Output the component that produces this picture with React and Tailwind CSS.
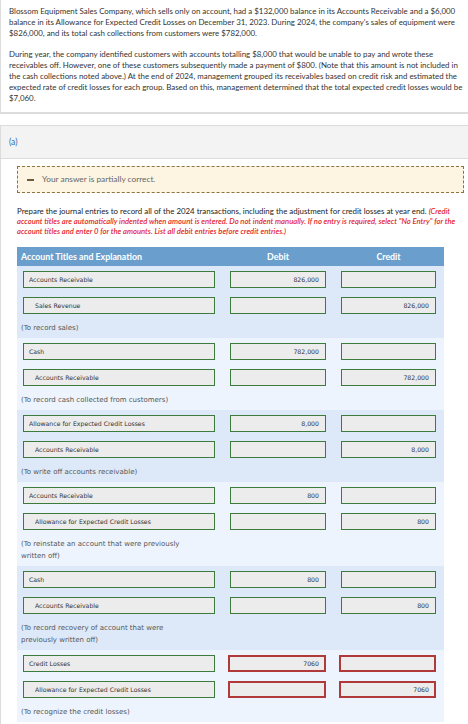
import React from 'react';

const entries = [
  {
    rows: [
      { account: 'Accounts Receivable', debit: '826,000', credit: '' },
      { account: 'Sales Revenue', debit: '', credit: '826,000', indent: true },
    ],
    note: '(To record sales)',
  },
  {
    rows: [
      { account: 'Cash', debit: '782,000', credit: '' },
      { account: 'Accounts Receivable', debit: '', credit: '782,000', indent: true },
    ],
    note: '(To record cash collected from customers)',
  },
  {
    rows: [
      { account: 'Allowance for Expected Credit Losses', debit: '8,000', credit: '' },
      { account: 'Accounts Receivable', debit: '', credit: '8,000', indent: true },
    ],
    note: '(To write off accounts receivable)',
  },
  {
    rows: [
      { account: 'Accounts Receivable', debit: '800', credit: '' },
      { account: 'Allowance for Expected Credit Losses', debit: '', credit: '800', indent: true },
    ],
    note: '(To reinstate an account that were previously written off)',
  },
  {
    rows: [
      { account: 'Cash', debit: '800', credit: '' },
      { account: 'Accounts Receivable', debit: '', credit: '800', indent: true },
    ],
    note: '(To record recovery of account that were previously written off)',
  },
  {
    rows: [
      { account: 'Credit Losses', debit: '7060', credit: '' },
      { account: 'Allowance for Expected Credit Losses', debit: '', credit: '7060', indent: true },
    ],
    note: '(To recognize the credit losses)',
    wrong: true,
  },
];

const AmountBox = ({ value, wrong, credit }) => {
  if (wrong) {
    return (
      <div className={`flex h-[17px] items-center justify-end border-2 border-[#b03a3a] bg-[#ececec] pr-[5px] text-[#333] ${credit ? 'ml-[6px] w-[97px]' : 'ml-[5px] w-[98px]'}`}>
        {value}
      </div>
    );
  }
  return (
    <div className={`flex h-[17px] items-center justify-end border border-[#3d7b3d] bg-[#ececec] pr-[6px] text-[#333] ${credit ? 'ml-[8px] w-[95px]' : 'ml-[7px] w-[96px]'}`}>
      {value}
    </div>
  );
};

const App = () => {
  return (
    <div className="min-h-screen bg-white font-['Lato','Liberation_Sans',sans-serif] text-[7.9px] text-[#333]">
      <section className="border-b-2 border-l border-[#dcdcdc] pb-[8px] pl-2 pr-0 pt-[6px] leading-[11px]">
        <p>
          Blossom Equipment Sales Company, which sells only on account, had a $132,000 balance in its Accounts Receivable and a $6,000 balance in its Allowance for Expected Credit Losses on December 31, 2023. During 2024, the company's sales of equipment were $826,000, and its total cash collections from customers were $782,000.
        </p>
        <p className="mt-[10px]">
          During year, the company identified customers with accounts totalling $8,000 that would be unable to pay and wrote these receivables off. However, one of these customers subsequently made a payment of $800. (Note that this amount is not included in the cash collections noted above.) At the end of 2024, management grouped its receivables based on credit risk and estimated the expected rate of credit losses for each group. Based on this, management determined that the total expected credit losses would be $7,060.
        </p>
      </section>

      <section className="mt-[11px] border-l border-t border-[#dcdcdc]">
        <div className="flex h-[33px] items-center border-b border-[#dcdcdc] bg-[#f3f3f3] px-2 text-[8.5px] text-[#2c6eb0]">
          (a)
        </div>

        <div className="pb-4 pl-4 pr-1 pt-[7px]">
          <div className="flex h-[27px] items-center gap-[8px] border border-dashed border-[#8a7444] bg-[#fdf5e2] pl-[9px] text-[8.3px] text-[#666]">
            <span className="h-[2px] w-[7px] bg-[#6e5d3c]" />
            <span>Your answer is partially correct.</span>
          </div>

          <p className="mt-[13px] leading-[10px] text-[#222]">
            Prepare the journal entries to record all of the 2024 transactions, including the adjustment for credit losses at year end.{' '}
            <span className="text-[7.65px] font-semibold italic leading-[10px] text-[#e3262b]">
              (Credit account titles are automatically indented when amount is entered. Do not indent manually. If no entry is required, select "No Entry" for the account titles and enter 0 for the amounts. List all debit entries before credit entries.)
            </span>
          </p>

          <div className="mt-[11px] w-[427px]">
            <div className="grid h-[19px] grid-cols-[206px_110px_111px] items-center bg-[#6a9fcd] text-[8.8px] font-bold text-white">
              <div className="pl-[4px]">Account Titles and Explanation</div>
              <div className="text-center">Debit</div>
              <div className="text-center">Credit</div>
            </div>

            {entries.map((entry, i) => (
              <div
                key={i}
                className={`pb-[4px] pt-[5px] font-['DejaVu_Sans','Verdana',sans-serif] ${i % 2 === 0 ? 'bg-[#dde9f8]' : 'bg-[#edf4fd]'}`}
              >
                <div className="flex flex-col gap-[9px] text-[6.2px]">
                  {entry.rows.map((row, j) => (
                    <div key={j} className="grid grid-cols-[206px_110px_111px]">
                      <div className={`ml-[6px] flex h-[17px] w-[192px] items-center border border-[#3d7b3d] bg-[#ececec] text-[#333] ${row.indent ? 'pl-[11px]' : 'pl-[5px]'}`}>
                        {row.account}
                      </div>
                      <AmountBox value={row.debit} wrong={entry.wrong} />
                      <AmountBox value={row.credit} wrong={entry.wrong} credit />
                    </div>
                  ))}
                </div>
                <p className="mt-[8px] w-[174px] pl-[4px] text-[7px] leading-[12px] text-[#555]">{entry.note}</p>
              </div>
            ))}
          </div>
        </div>
      </section>
    </div>
  );
};

export default App;
